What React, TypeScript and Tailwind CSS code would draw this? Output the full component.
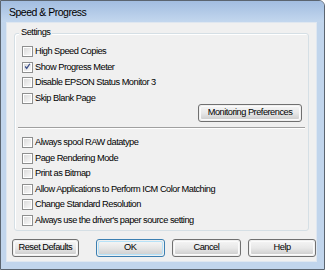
import React from 'react';

const font = { fontFamily: '"Liberation Sans", Arial, sans-serif' };

function CheckBox({ label, checked = false }: { label: string; checked?: boolean }) {
  return (
    <div className="flex items-center h-[15.5px]">
      <div className="w-[11px] h-[11px] border border-[#8e8f8f] bg-white p-[1px] shrink-0">
        <div className="w-full h-full bg-gradient-to-br from-[#dcdcdc] to-[#f8f8f8] flex items-center justify-center">
          {checked && (
            <svg width="9" height="9" viewBox="0 0 9 9" className="-mt-[1px]">
              <path d="M1.5 4.5 L3.5 7 L7.5 1" stroke="#3b4f8a" strokeWidth="1.6" fill="none" />
            </svg>
          )}
        </div>
      </div>
      <span className="ml-[2px] text-[9.25px] tracking-[-0.5px] text-black leading-none">{label}</span>
    </div>
  );
}

function Button({ label, width, primary = false }: { label: string; width: string; primary?: boolean }) {
  return (
    <div
      className={`${width} h-[18px] rounded-[3px] border ${
        primary ? 'border-[#3c7fb1]' : 'border-[#707070]'
      } p-[1px]`}
    >
      <div
        className={`h-full rounded-[2px] flex items-center justify-center text-[9.25px] tracking-[-0.5px] text-black border ${
          primary ? 'border-[#b6e2f8] bg-gradient-to-b from-[#f4f4f4] via-[#e6e6e6] to-[#d2d2d2]' : 'border-[#fbfbfb] bg-gradient-to-b from-[#f3f3f3] via-[#e8e8e8] to-[#d0d0d0]'
        }`}
      >
        {label}
      </div>
    </div>
  );
}

export default function App() {
  return (
    <div style={font} className="w-[325px] h-[270px] bg-white">
      <div className="w-[325px] h-[270px] border border-[#5b6570] rounded-tr-[6px] bg-[#c1d5ec] flex flex-col overflow-hidden">
        <div className="h-[21px] shrink-0 bg-gradient-to-b from-[#a2bde0] to-[#c3d7ee] flex items-center pl-[8px] pt-[3px]">
          <span className="text-[10.5px] tracking-[-0.5px] text-black">Speed &amp; Progress</span>
        </div>
        <div className="ml-[5px] mr-[7px] h-[240px] bg-[#f0f0f0] border border-[#dfe7f0] flex flex-col">
          <div className="relative mx-[7px] mt-[10px] h-[198px] border border-[#d5dfe5] rounded-[3px] shadow-[inset_1px_1px_0_#ffffff]">
            <span className="absolute left-[4px] -top-[6px] px-[2px] bg-[#f0f0f0] text-[9.25px] tracking-[-0.5px] leading-none text-black">
              Settings
            </span>
            <div className="flex flex-col pl-[7px] pt-[10px]">
              <CheckBox label="High Speed Copies" />
              <CheckBox label="Show Progress Meter" checked />
              <CheckBox label="Disable EPSON Status Monitor 3" />
              <CheckBox label="Skip Blank Page" />
            </div>
            <div className="flex justify-end pr-[6px] -mt-[2px]">
              <Button label="Monitoring Preferences" width="w-[104px]" />
            </div>
            <div className="mx-[3px] mt-[5px] h-[2px] border-t border-[#a0a0a0] border-b border-b-white" />
            <div className="flex flex-col pl-[7px] pt-[6px]">
              <CheckBox label="Always spool RAW datatype" />
              <CheckBox label="Page Rendering Mode" />
              <CheckBox label="Print as Bitmap" />
              <CheckBox label="Allow Applications to Perform ICM Color Matching" />
              <CheckBox label="Change Standard Resolution" />
              <CheckBox label="Always use the driver's paper source setting" />
            </div>
          </div>
          <div className="flex items-center mt-[8px] pl-[5px] gap-[7px]">
            <Button label="Reset Defaults" width="w-[67px]" />
            <div className="w-[3px]" />
            <Button label="OK" width="w-[69px]" primary />
            <Button label="Cancel" width="w-[70px]" />
            <Button label="Help" width="w-[68px]" />
          </div>
        </div>
      </div>
    </div>
  );
}
